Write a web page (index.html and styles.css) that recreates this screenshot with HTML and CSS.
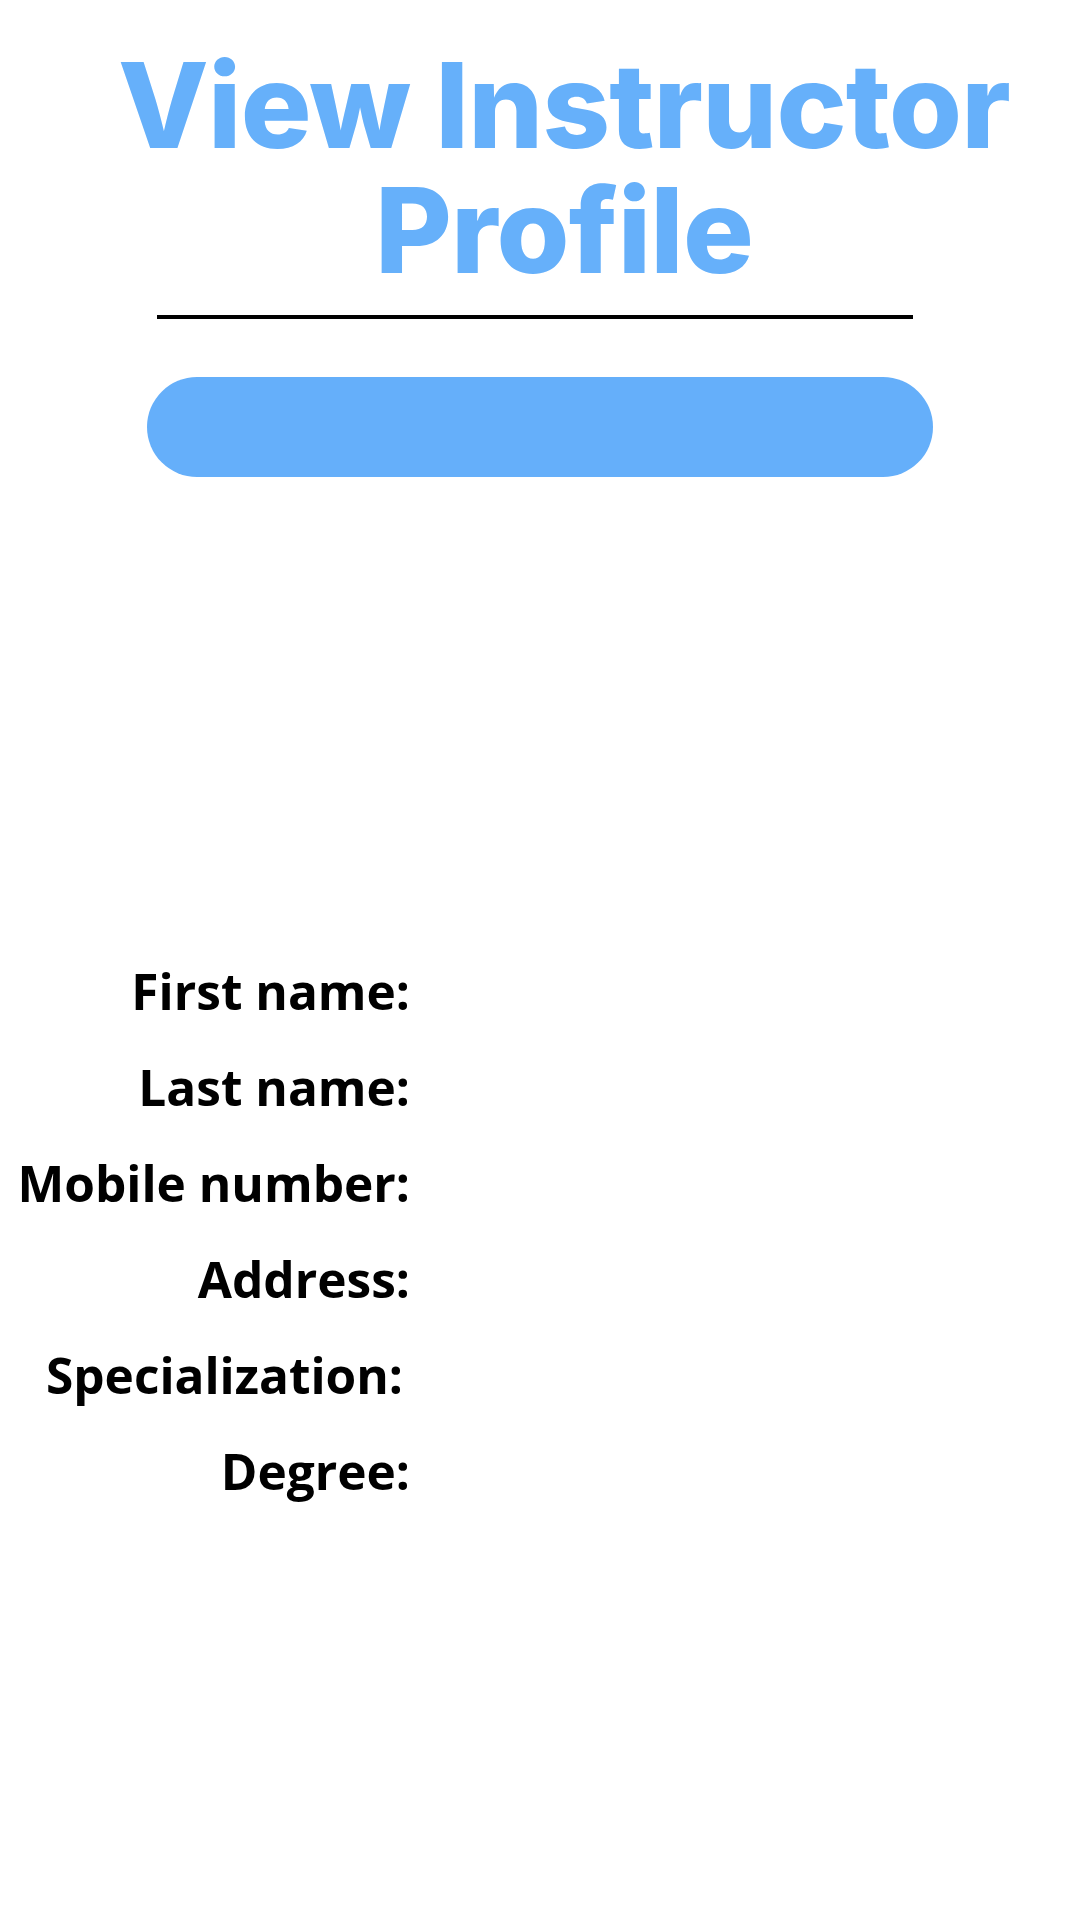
FILE: index.html
```html
<!DOCTYPE html>
<html lang="en">
<head>
<meta charset="utf-8">
<title>View Instructor Profile</title>
<link rel="stylesheet" href="styles.css">
</head>
<body>
<main class="page">
  <h1 class="title">View Instructor<br>Profile</h1>
  <div class="rule"></div>
  <div class="pill"></div>
  <dl class="details">
    <dt class="label">First name:</dt><dd class="value"></dd>
    <dt class="label">Last name:</dt><dd class="value"></dd>
    <dt class="label">Mobile number:</dt><dd class="value"></dd>
    <dt class="label">Address:</dt><dd class="value"></dd>
    <dt class="label label-shift">Specialization:</dt><dd class="value"></dd>
    <dt class="label">Degree:</dt><dd class="value"></dd>
  </dl>
</main>
</body>
</html>
```

FILE: styles.css
```css
html, body {
  margin: 0;
  padding: 0;
  background: #ffffff;
}

.page {
  width: 1080px;
  min-height: 1920px;
  display: flex;
  flex-direction: column;
  align-items: center;
}

.title {
  margin: 43px 0 0 48px;
  font-family: Inter, "Liberation Sans", sans-serif;
  font-weight: 800;
  font-size: 118px;
  line-height: 125px;
  letter-spacing: -0.8px;
  color: #66b0fa;
  text-align: center;
}

.rule {
  margin: 22px 0 0 -10px;
  width: 756px;
  height: 4px;
  background: #000000;
}

.pill {
  margin-top: 58px;
  width: 786px;
  height: 100px;
  border-radius: 50px;
  background: #65affa;
}

.details {
  align-self: flex-start;
  margin: 466px 0 0 0;
  display: grid;
  grid-template-columns: 410px 1fr;
}

.label {
  font-family: "Open Sans", "Liberation Sans", sans-serif;
  font-weight: 700;
  font-size: 49.6px;
  line-height: 96px;
  color: #000000;
  text-align: right;
}

.label-shift {
  padding-right: 7px;
}

.value {
  margin: 0;
}
```
